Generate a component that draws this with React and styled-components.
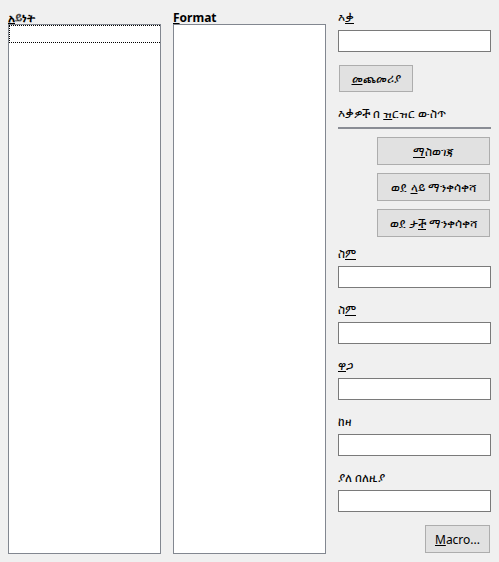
import React from 'react';
import styled, { createGlobalStyle } from 'styled-components';

const GlobalStyle = createGlobalStyle`
  html, body {
    margin: 0;
    padding: 0;
    background: #f0f0f0;
  }
  body {
    font-family: "Noto Sans", "DejaVu Sans", sans-serif;
    font-size: 12px;
    color: #000;
  }
`;

const Dialog = styled.div`
  width: 499px;
  height: 562px;
  box-sizing: border-box;
  padding: 8px;
  display: grid;
  grid-template-columns: 153px 153px 153px;
  column-gap: 12px;
`;

const Column = styled.div`
  display: flex;
  flex-direction: column;
`;

const ListTitle = styled.div`
  height: 16px;
  line-height: 20px;
  font-weight: bold;
`;

const ListBox = styled.div`
  height: 530px;
  box-sizing: border-box;
  border: 1px solid #828790;
  background: #fff;
`;

const FocusRow = styled.div`
  height: 16px;
  border: 1px dotted #000;
  border-right: none;
`;

const Label = styled.div`
  height: 22px;
  line-height: 19px;
  margin-top: ${(p) => p.$top || 0}px;
`;

const TextInput = styled.input`
  display: block;
  width: 153px;
  height: 22px;
  box-sizing: border-box;
  border: 1px solid #7a7a7a;
  background: #fff;
  margin: 0;
  padding: 0 3px;
  font: inherit;
  outline: none;
`;

const Button = styled.button`
  display: block;
  box-sizing: border-box;
  width: ${(p) => p.$width}px;
  height: ${(p) => p.$height || 28}px;
  margin: ${(p) => p.$top || 0}px 0 0 ${(p) => (p.$right ? 'auto' : '1px')};
  margin-right: ${(p) => (p.$right ? '1px' : '0')};
  border: 1px solid #adadad;
  background: #e1e1e1;
  font: inherit;
  color: #000;
  padding: 0;
`;

const SectionLabel = styled.div`
  height: 20px;
  line-height: 20px;
  margin-top: 12px;
`;

const Separator = styled.div`
  height: 2px;
  background: #8a8d95;
  margin-top: 3px;
`;

const U = styled.span`
  text-decoration: underline;
`;

const Field = ({ label, top }) => (
  <>
    <Label $top={top}>{label}</Label>
    <TextInput type="text" />
  </>
);

export default function App() {
  return (
    <>
      <GlobalStyle />
      <Dialog>
        <Column>
          <ListTitle><U>አ</U>ይነት</ListTitle>
          <ListBox>
            <FocusRow />
          </ListBox>
        </Column>
        <Column>
          <ListTitle><U>F</U>ormat</ListTitle>
          <ListBox />
        </Column>
        <Column>
          <Field label={<>እ<U>ቃ</U></>} />
          <Button $width={74} $height={27} $top={13}><U>መ</U>ጨመሪያ</Button>
          <SectionLabel>እቃዎች በ <U>ዝ</U>ርዝር ውስጥ</SectionLabel>
          <Separator />
          <Button $width={113} $top={8} $right><U>ማ</U>ስወገጃ</Button>
          <Button $width={113} $top={8} $right>ወደ <U>ላ</U>ይ ማንቀሳቀሻ</Button>
          <Button $width={113} $top={8} $right>ወደ ታ<U>ች</U> ማንቀሳቀሻ</Button>
          <Field label={<>ስ<U>ም</U></>} top={7} />
          <Field label={<>ስ<U>ም</U></>} top={12} />
          <Field label={<><U>ዋ</U>ጋ</>} top={12} />
          <Field label="ከዛ" top={12} />
          <Field label="ያለ በለዚያ" top={12} />
          <Button $width={65} $top={13} $right><U>M</U>acro...</Button>
        </Column>
      </Dialog>
    </>
  );
}
